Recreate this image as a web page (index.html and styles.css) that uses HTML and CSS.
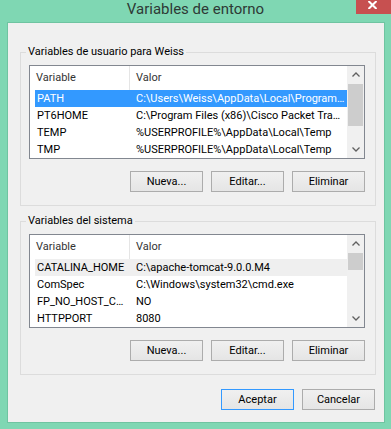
FILE: index.html
```html
<!DOCTYPE html>
<html lang="es">
<head>
  <meta charset="UTF-8">
  <title>Variables de entorno</title>
  <link rel="stylesheet" href="styles.css">
</head>
<body>
  <div class="window">
    <div class="titlebar">
      <span></span>
      <h1 class="title">Variables de entorno</h1>
      <button class="close" aria-label="Cerrar">
        <svg width="9" height="8" viewBox="0 0 9 8"><path d="M0.5 0 L8.5 8 M8.5 0 L0.5 8" stroke="#fff" stroke-width="2" fill="none"/></svg>
      </button>
    </div>

    <div class="client">
      <fieldset class="group">
        <legend>Variables de usuario para Weiss</legend>
        <div class="listview">
          <div class="lv-body">
            <div class="lv-head"><span class="lv-name">Variable</span><span class="lv-value">Valor</span></div>
            <div class="lv-row selected"><span class="lv-name">PATH</span><span class="lv-value">C:\Users\Weiss\AppData\Local\Program…</span></div>
            <div class="lv-row"><span class="lv-name">PT6HOME</span><span class="lv-value">C:\Program Files (x86)\Cisco Packet Tra…</span></div>
            <div class="lv-row"><span class="lv-name">TEMP</span><span class="lv-value">%USERPROFILE%\AppData\Local\Temp</span></div>
            <div class="lv-row"><span class="lv-name">TMP</span><span class="lv-value">%USERPROFILE%\AppData\Local\Temp</span></div>
          </div>
          <div class="scrollbar">
            <div class="sb-arrow"><svg width="8" height="5" viewBox="0 0 8 5"><path d="M0.5 4.5 L4 1 L7.5 4.5" stroke="#606060" stroke-width="1.3" fill="none"/></svg></div>
            <div class="sb-track"><div class="sb-thumb thumb-user"></div></div>
            <div class="sb-arrow"><svg width="8" height="5" viewBox="0 0 8 5"><path d="M0.5 0.5 L4 4 L7.5 0.5" stroke="#606060" stroke-width="1.3" fill="none"/></svg></div>
          </div>
        </div>
        <div class="actions">
          <button class="btn">Nueva...</button>
          <button class="btn">Editar...</button>
          <button class="btn">Eliminar</button>
        </div>
      </fieldset>

      <fieldset class="group system">
        <legend>Variables del sistema</legend>
        <div class="listview">
          <div class="lv-body">
            <div class="lv-head"><span class="lv-name">Variable</span><span class="lv-value">Valor</span></div>
            <div class="lv-row focused"><span class="lv-name">CATALINA_HOME</span><span class="lv-value">C:\apache-tomcat-9.0.0.M4</span></div>
            <div class="lv-row"><span class="lv-name">ComSpec</span><span class="lv-value">C:\Windows\system32\cmd.exe</span></div>
            <div class="lv-row"><span class="lv-name">FP_NO_HOST_C…</span><span class="lv-value">NO</span></div>
            <div class="lv-row"><span class="lv-name">HTTPPORT</span><span class="lv-value">8080</span></div>
          </div>
          <div class="scrollbar">
            <div class="sb-arrow"><svg width="8" height="5" viewBox="0 0 8 5"><path d="M0.5 4.5 L4 1 L7.5 4.5" stroke="#606060" stroke-width="1.3" fill="none"/></svg></div>
            <div class="sb-track"><div class="sb-thumb thumb-system"></div></div>
            <div class="sb-arrow"><svg width="8" height="5" viewBox="0 0 8 5"><path d="M0.5 0.5 L4 4 L7.5 0.5" stroke="#606060" stroke-width="1.3" fill="none"/></svg></div>
          </div>
        </div>
        <div class="actions">
          <button class="btn">Nueva...</button>
          <button class="btn">Editar...</button>
          <button class="btn">Eliminar</button>
        </div>
      </fieldset>

      <div class="dialog-actions">
        <button class="btn default">Aceptar</button>
        <button class="btn">Cancelar</button>
      </div>
    </div>
  </div>
</body>
</html>
```
FILE: styles.css
```css
* {
  margin: 0;
  padding: 0;
  box-sizing: border-box;
}

body {
  background: #7fd7b3;
  font-family: Roboto, "Liberation Sans", sans-serif;
  font-size: 11px;
  color: #000;
  overflow: hidden;
}

.window {
  width: 391px;
  height: 429px;
}

.titlebar {
  display: grid;
  grid-template-columns: 1fr auto 1fr;
  height: 22px;
}

.title {
  font-size: 15px;
  font-weight: normal;
  line-height: 18px;
  color: #2e3a36;
  white-space: nowrap;
}

.close {
  justify-self: end;
  width: 35px;
  height: 14px;
  border: none;
  background: #c75050;
  display: flex;
  justify-content: center;
  align-items: flex-start;
  padding: 1px 2px 0 0;
}

.client {
  margin-left: 7px;
  width: 378px;
  background: #f0f0f0;
  border: 1px solid #6fc4a1;
  padding-bottom: 12px;
}

.group {
  margin: 21px 0 0 12px;
  width: 356px;
  border: 1px solid #dcdcdc;
  padding: 0 10px 13px 8px;
}

.group.system {
  margin-top: 7px;
}

.group legend {
  margin-left: -3px;
  padding: 0 2px;
  line-height: 16px;
  color: #000;
}

.listview {
  display: flex;
  margin-top: 5px;
  height: 94px;
  border: 1px solid #828790;
  background: #fff;
}

.lv-body {
  flex: 1;
  min-width: 0;
}

.lv-head {
  display: flex;
  height: 24px;
  line-height: 24px;
  color: #333;
}

.lv-head .lv-name {
  width: 100px;
  padding-left: 6px;
  border-right: 1px solid #e5e5e5;
}

.lv-value {
  flex: 1;
  padding-left: 6px;
  white-space: nowrap;
  overflow: hidden;
}

.lv-row {
  display: flex;
  margin-left: 5px;
  height: 17px;
  line-height: 17px;
}

.lv-row .lv-name {
  width: 95px;
  padding-left: 2px;
  white-space: nowrap;
}

.lv-row.selected {
  background: #3399ff;
  color: #fff;
}

.lv-row.focused {
  background: #efefef;
}

.scrollbar {
  width: 17px;
  display: flex;
  flex-direction: column;
  background: #f0f0f0;
}

.sb-arrow {
  height: 17px;
  display: flex;
  justify-content: center;
  align-items: center;
}

.sb-track {
  flex: 1;
  padding: 1px 1px 0;
}

.sb-thumb {
  background: #cdcdcd;
}

.thumb-user {
  height: 42px;
}

.thumb-system {
  height: 17px;
}

.actions,
.dialog-actions {
  display: flex;
  justify-content: flex-end;
  gap: 8px;
}

.actions {
  margin-top: 12px;
}

.dialog-actions {
  margin-top: 14px;
  padding-right: 9px;
}

.btn {
  width: 73px;
  height: 21px;
  border: 1px solid #acacac;
  background: linear-gradient(#f0f0f0, #e5e5e5);
  font-family: inherit;
  font-size: 11px;
  color: #000;
}

.btn.default {
  border-color: #3399ff;
}
```
